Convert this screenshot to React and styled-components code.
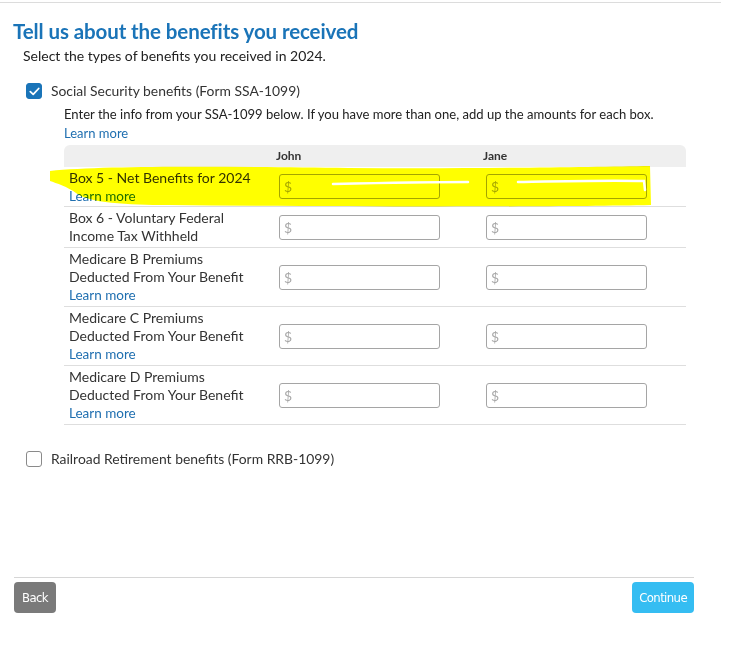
import React from "react";
import styled, { createGlobalStyle } from "styled-components";

const Global = createGlobalStyle`
  html, body { margin: 0; padding: 0; background: #fff; }
  body { font-family: Lato, "Open Sans", "Liberation Sans", sans-serif; color: #333; }
  * { box-sizing: border-box; }
`;

const Page = styled.div`
  width: 731px;
  height: 647px;
  padding-top: 2px;
  display: flex;
  flex-direction: column;
`;

const TopRule = styled.div`
  height: 1px;
  background: #dcdcdc;
  margin-right: 10px;
`;

const Content = styled.div`
  padding: 0 37px 0 13px;
  display: flex;
  flex-direction: column;
  flex: 1;
`;

const Title = styled.h1`
  margin: 14px 0 0 0;
  font-size: 20.5px;
  line-height: 28px;
  font-weight: 700;
  color: #1a74b8;
  letter-spacing: -0.1px;
`;

const Subtitle = styled.p`
  margin: 2px 0 0 10px;
  font-size: 14px;
  line-height: 18px;
  color: #222;
`;

const Option = styled.label`
  display: flex;
  align-items: center;
  gap: 9px;
  margin: ${(p) => p.$top}px 0 0 13px;
  font-size: 13.9px;
  line-height: 18px;
  color: #333;
`;

const Box = styled.span`
  width: 16px;
  height: 16px;
  border-radius: 3px;
  display: inline-flex;
  align-items: center;
  justify-content: center;
  background: ${(p) => (p.$checked ? "#1a74b8" : "#fff")};
  border: 1px solid ${(p) => (p.$checked ? "#1a74b8" : "#8a8a8a")};
`;

const Detail = styled.div`
  margin-left: 51px;
  display: flex;
  flex-direction: column;
`;

const Description = styled.p`
  margin: 5px 0 0 0;
  font-size: 13.05px;
  line-height: 19px;
  color: #222;
`;

const Link = styled.a`
  color: #1f6fb0;
  font-size: ${(p) => p.$size || 13}px;
  line-height: ${(p) => p.$lh || 19}px;
  text-decoration: none;
  display: block;
`;

const Table = styled.div`
  margin-top: 2px;
  width: 622px;
`;

const Grid = styled.div`
  display: grid;
  grid-template-columns: 208px 207px 207px;
`;

const Header = styled(Grid)`
  height: 22px;
  background: #efefef;
  border-radius: 6px 6px 0 0;
  align-items: center;
  padding-bottom: 2px;
`;

const HeadCell = styled.div`
  padding-left: 4px;
  font-size: 12px;
  font-weight: 700;
  color: #333;
`;

const Row = styled(Grid)`
  position: relative;
  height: ${(p) => p.$h}px;
  border-bottom: 1px solid #dedede;
  align-items: center;
`;

const LabelCell = styled.div`
  padding-left: 5px;
  font-size: 14px;
  line-height: 18px;
  color: #333;
`;

const InputCell = styled.div`
  padding-left: 7px;
`;

const Money = styled.div`
  width: 161px;
  height: 25px;
  border: 1px solid #a5a5a5;
  border-radius: 3px;
  background: #fff;
  display: flex;
  align-items: center;
  padding-left: 4px;
  font-size: 14px;
  color: #a8a8a8;
`;

const Highlight = styled.svg`
  position: absolute;
  left: -16px;
  top: -4px;
  pointer-events: none;
  mix-blend-mode: multiply;
`;

const Streak = styled.svg`
  position: absolute;
  left: -16px;
  top: -4px;
  pointer-events: none;
`;

const Footer = styled.div`
  margin-top: auto;
  margin-bottom: 34px;
  margin-left: 1px;
  border-top: 1px solid #d6d6d6;
  padding-top: 4px;
  width: 680px;
  display: flex;
  justify-content: space-between;
`;

const Button = styled.button`
  height: 31px;
  padding: 0 ${(p) => p.$pad}px;
  border: none;
  border-radius: 4px;
  background: ${(p) => p.$bg};
  color: #fff;
  font-family: "Liberation Sans Narrow", "DejaVu Sans Condensed", "Liberation Sans", sans-serif;
  font-size: 13px;
  letter-spacing: -0.6px;
`;

const Check = () => (
  <svg width="11" height="9" viewBox="0 0 11 9">
    <path d="M1.3 4.6 L4.2 7.3 L9.7 1.5" fill="none" stroke="#fff" strokeWidth="1.8" strokeLinecap="round" strokeLinejoin="round" />
  </svg>
);

const rows = [
  { h: 40, lines: ["Box 5 - Net Benefits for 2024"], link: true, mark: true },
  { h: 41, lines: ["Box 6 - Voluntary Federal", "Income Tax Withheld"] },
  { h: 59, lines: ["Medicare B Premiums", "Deducted From Your Benefit"], link: true },
  { h: 59, lines: ["Medicare C Premiums", "Deducted From Your Benefit"], link: true },
  { h: 59, lines: ["Medicare D Premiums", "Deducted From Your Benefit"], link: true },
];

export default function App() {
  return (
    <Page>
      <Global />
      <TopRule />
      <Content>
        <Title>Tell us about the benefits you received</Title>
        <Subtitle>Select the types of benefits you received in 2024.</Subtitle>
        <Option $top={17}>
          <Box $checked>
            <Check />
          </Box>
          Social Security benefits (Form SSA-1099)
        </Option>
        <Detail>
          <Description>
            Enter the info from your SSA-1099 below. If you have more than one, add up the amounts for each box.
          </Description>
          <Link>Learn more</Link>
          <Table>
            <Header>
              <div />
              <HeadCell>John</HeadCell>
              <HeadCell>Jane</HeadCell>
            </Header>
            {rows.map((r, i) => (
              <Row key={i} $h={r.h}>
                <LabelCell>
                  {r.lines.map((l) => (
                    <div key={l}>{l}</div>
                  ))}
                  {r.link && (
                    <Link $size={13.5} $lh={18}>
                      Learn more
                    </Link>
                  )}
                </LabelCell>
                <InputCell>
                  <Money>$</Money>
                </InputCell>
                <InputCell>
                  <Money>$</Money>
                </InputCell>
                {r.mark && (
                  <>
                    <Highlight width="620" height="48" viewBox="0 0 620 48">
                      <path
                        d="M2 8 C 60 2, 200 4, 300 5 C 420 6, 540 4, 602 3 L 603 42 C 500 44, 300 44, 120 42 C 80 42, 40 40, 28 30 C 20 24, 8 20, 2 18 Z"
                        fill="#ffff00"
                      />
                    </Highlight>
                    <Streak width="620" height="48" viewBox="0 0 620 48">
                      <path d="M285 21 C 330 20, 380 19, 420 19 M 470 19 C 520 18, 560 17, 596 18 L 597 27" fill="none" stroke="#fff" strokeWidth="2.5" strokeLinecap="round" />
                    </Streak>
                  </>
                )}
              </Row>
            ))}
          </Table>
        </Detail>
        <Option $top={25}>
          <Box />
          Railroad Retirement benefits (Form RRB-1099)
        </Option>
        <Footer>
          <Button $bg="#7a7a7a" $pad={8}>Back</Button>
          <Button $bg="#35bdf2" $pad={7}>Continue</Button>
        </Footer>
      </Content>
    </Page>
  );
}
